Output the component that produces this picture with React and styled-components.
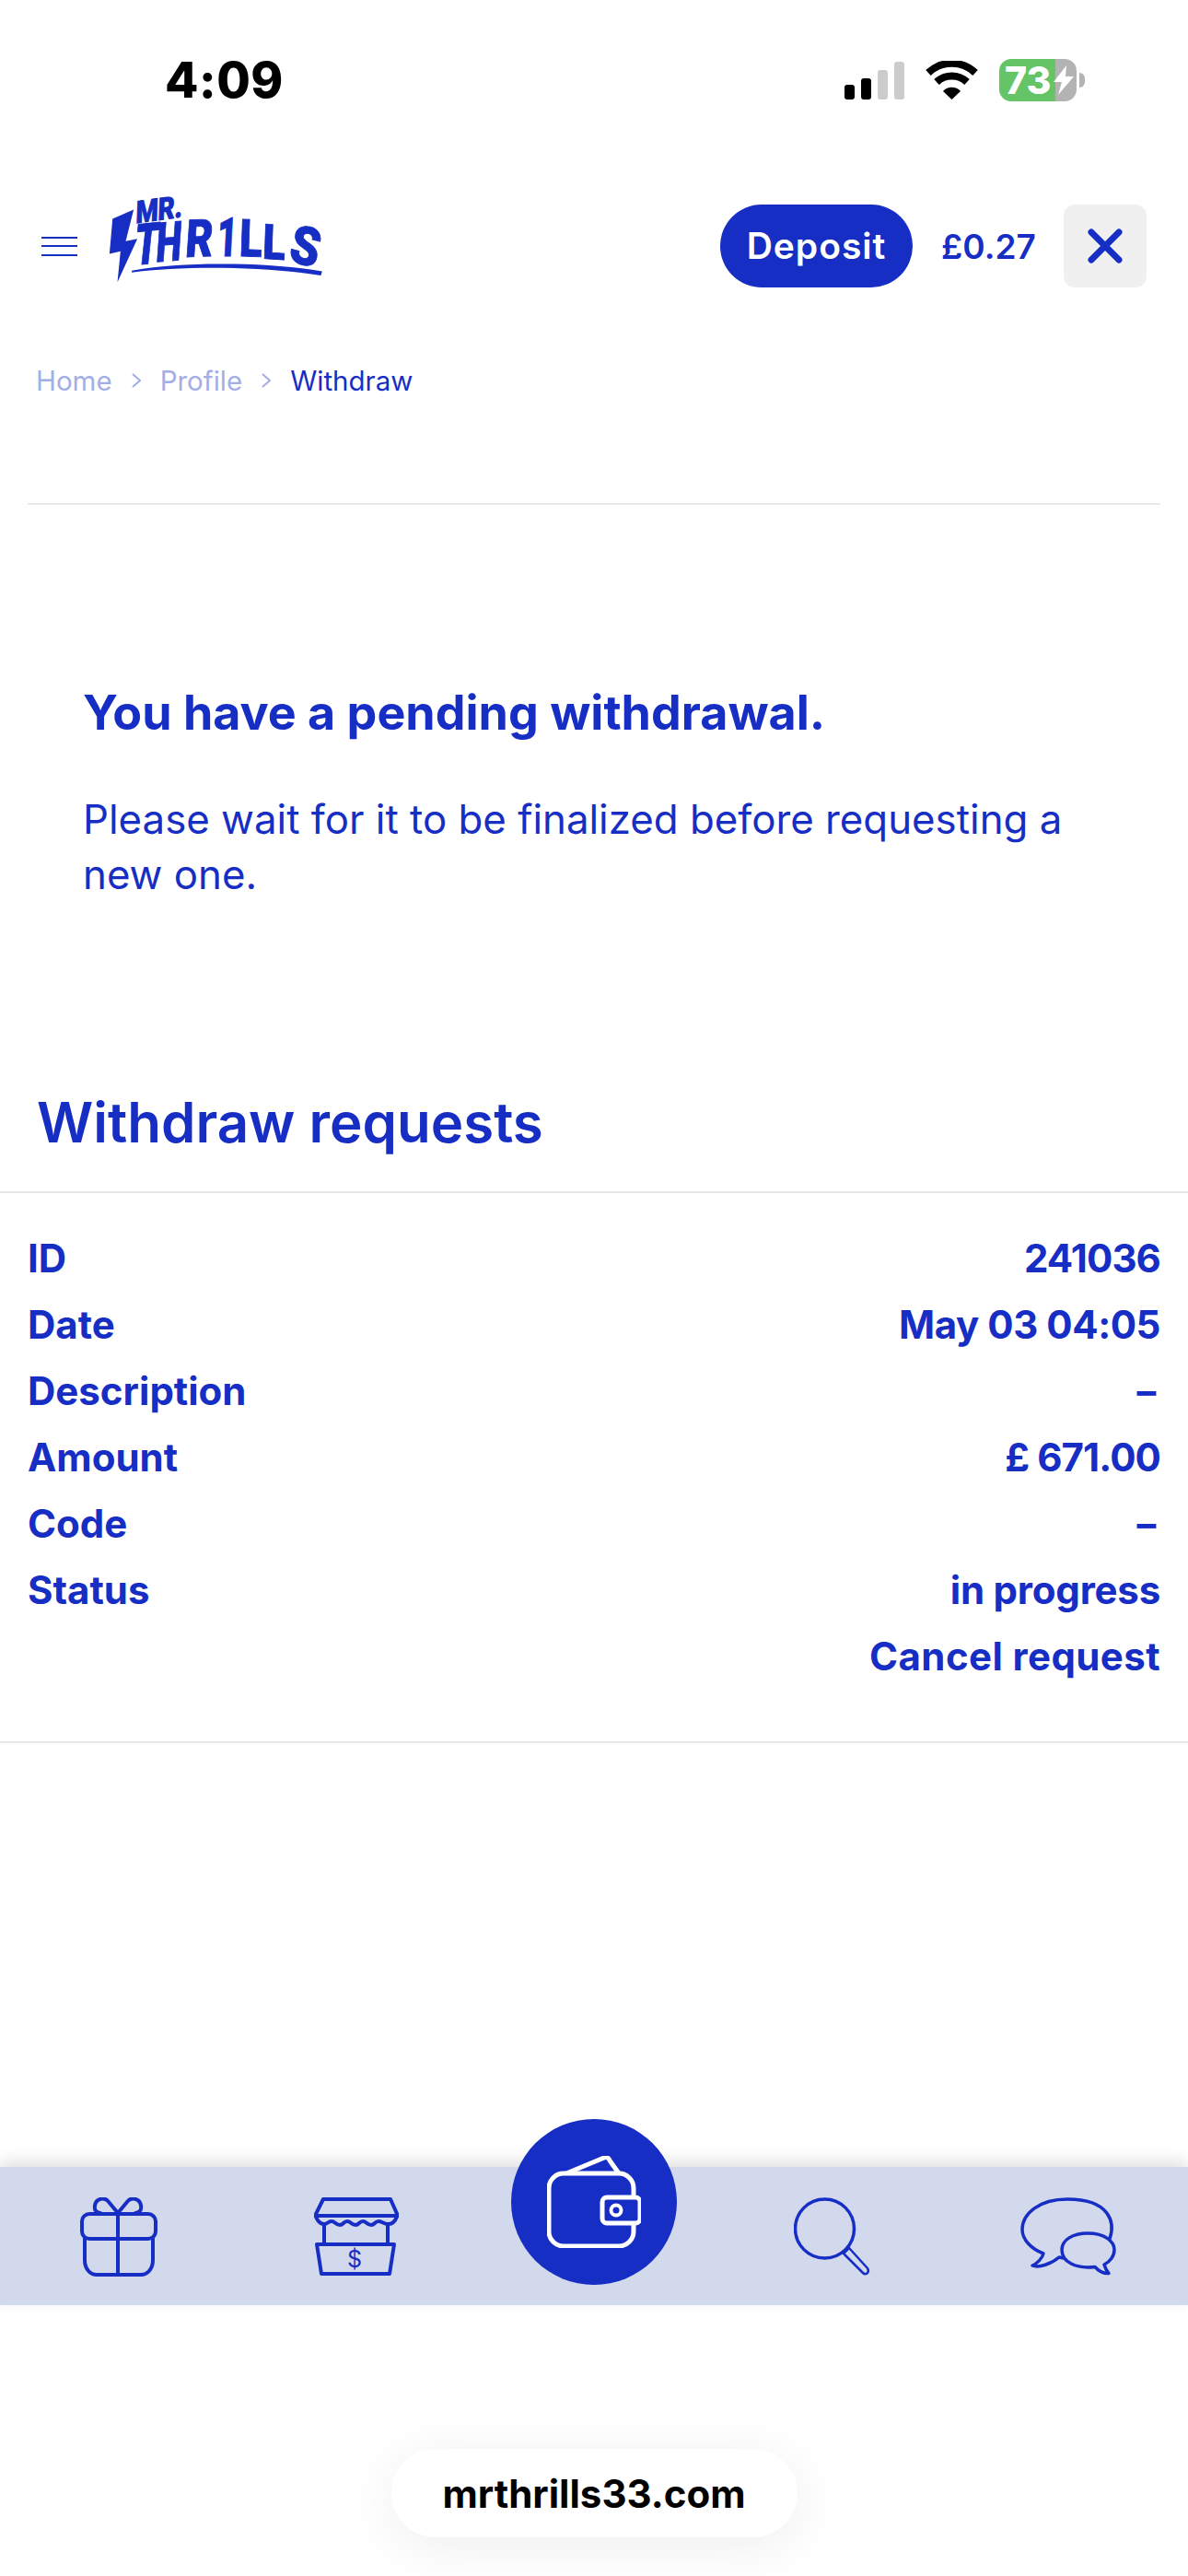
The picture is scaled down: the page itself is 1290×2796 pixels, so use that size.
import React from 'react';
import styled, { createGlobalStyle } from 'styled-components';

const BLUE = '#172ec4';

const GlobalStyle = createGlobalStyle`
  html, body {
    margin: 0;
    padding: 0;
    background: #fff;
    font-family: Inter, "Noto Sans", sans-serif;
  }
`;

const Page = styled.div`
  width: 1290px;
  height: 2796px;
  overflow: hidden;
  display: flex;
  flex-direction: column;
  color: ${BLUE};
`;

const StatusBar = styled.div`
  height: 70px;
  margin-top: 52px;
  padding: 0 121px 0 179px;
  display: flex;
  align-items: center;
  justify-content: space-between;
`;

const Clock = styled.div`
  font-family: Inter, sans-serif;
  font-size: 53px;
  font-weight: 800;
  color: #000;
  letter-spacing: 0.5px;
`;

const StatusIcons = styled.div`
  display: flex;
  align-items: center;
  gap: 23px;
`;

const Signal = styled.div`
  display: flex;
  align-items: flex-end;
  gap: 7px;
  height: 41px;
`;

const SignalBar = styled.span`
  width: 11px;
  height: ${(p) => p.$h}px;
  border-radius: 3px;
  background: ${(p) => (p.$on ? '#000' : '#cccccc')};
`;

const Battery = styled.div`
  position: relative;
  width: 84px;
  height: 46px;
  border-radius: 13px;
  background: linear-gradient(90deg, #65c466 73%, #b3b3b3 73%);
  color: #fff;
  font-size: 41px;
  font-weight: 800;
  line-height: 46px;
  padding-left: 6px;
  box-sizing: border-box;
  &::after {
    content: '';
    position: absolute;
    right: -9px;
    top: 15px;
    width: 6px;
    height: 16px;
    border-radius: 0 6px 6px 0;
    background: #b3b3b3;
  }
  svg {
    position: absolute;
    left: 58px;
    top: 7px;
  }
`;

const Header = styled.header`
  margin-top: 100px;
  height: 90px;
  padding: 0 45px;
  display: flex;
  align-items: center;
`;

const Burger = styled.div`
  width: 39px;
  height: 21px;
  display: flex;
  flex-direction: column;
  justify-content: space-between;
  span {
    height: 2px;
    background: ${BLUE};
  }
`;

const Logo = styled.svg`
  width: 233px;
  height: 98px;
  margin-left: 34px;
  margin-top: -16px;
  overflow: visible;
`;

const HeaderRight = styled.div`
  margin-left: auto;
  display: flex;
  align-items: center;
`;

const DepositButton = styled.div`
  width: 209px;
  height: 90px;
  padding-bottom: 2px;
  box-sizing: border-box;
  border-radius: 45px;
  background: ${BLUE};
  color: #fff;
  font-size: 39px;
  letter-spacing: 1px;
  font-weight: 600;
  display: flex;
  align-items: center;
  justify-content: center;
`;

const Balance = styled.div`
  margin-left: 31px;
  width: 103px;
  font-size: 37px;
  font-weight: 600;
  white-space: nowrap;
`;

const CloseButton = styled.div`
  margin-left: 30px;
  width: 90px;
  height: 90px;
  border-radius: 12px;
  background: #f0f0f0;
  display: flex;
  align-items: center;
  justify-content: center;
`;

const Breadcrumb = styled.nav`
  margin-top: 81px;
  padding-left: 39px;
  display: flex;
  align-items: center;
  height: 40px;
  font-size: 29.5px;
`;

const Crumb = styled.span`
  color: ${(p) => (p.$current ? BLUE : '#a2aee6')};
`;

const CrumbArrow = styled.svg`
  width: 10px;
  height: 16px;
  margin: 0 21px;
`;

const Divider = styled.div`
  height: 2px;
  margin: ${(p) => p.$margin || '0'};
  background: #e9e9e9;
`;

const Notice = styled.section`
  margin-top: 196px;
  padding: 0 70px 0 90px;
`;

const NoticeTitle = styled.h2`
  margin: 0;
  font-size: 52px;
  line-height: 60px;
  font-weight: 700;
`;

const NoticeText = styled.p`
  margin: 56px 0 0;
  font-size: 43.8px;
  line-height: 60px;
  font-weight: 400;
`;

const SectionTitle = styled.h1`
  margin: 198px 0 0;
  padding-left: 40px;
  font-size: 60px;
  line-height: 80px;
  font-weight: 600;
`;

const RequestTable = styled.div`
  margin-top: 35px;
  padding: 34px 30px 57px;
  border-top: 2px solid #e6e6e6;
  border-bottom: 2px solid #e6e6e6;
`;

const Row = styled.div`
  height: 72px;
  display: flex;
  align-items: center;
  justify-content: space-between;
  font-size: 42px;
  font-weight: 700;
`;

const RowValue = styled.span`
  letter-spacing: ${(p) => p.$spacing || 0}px;
  transform-origin: right center;
  transform: ${(p) => (p.$dash ? 'scaleX(1.5)' : 'none')};
`;

const NavBar = styled.nav`
  position: relative;
  margin-top: 460px;
  height: 150px;
  flex: none;
  background: #d3d9ed;
  box-shadow: 0 -6px 16px rgba(0, 0, 0, 0.12);
`;

const NavIcon = styled.svg`
  position: absolute;
  left: ${(p) => p.$x}px;
  top: ${(p) => p.$y}px;
  fill: none;
  stroke: ${BLUE};
  stroke-linejoin: round;
  stroke-linecap: round;
`;

const WalletButton = styled.div`
  position: absolute;
  left: 555px;
  top: -52px;
  width: 180px;
  height: 180px;
  border-radius: 50%;
  background: ${BLUE};
  display: flex;
  align-items: center;
  justify-content: center;
`;

const UrlPill = styled.div`
  margin: 156px auto 0;
  width: 441px;
  height: 96px;
  flex: none;
  border-radius: 48px;
  background: #fff;
  color: #000;
  font-size: 42px;
  font-weight: 700;
  display: flex;
  align-items: center;
  justify-content: center;
  box-shadow: 0 10px 60px rgba(0, 0, 0, 0.07);
`;

const ROWS = [
  ['ID', '241036', -0.9],
  ['Date', 'May 03 04:05', -0.45],
  ['Description', '-'],
  ['Amount', '£ 671.00', -0.9],
  ['Code', '-'],
  ['Status', 'in progress', -0.2],
  ['', 'Cancel request', 0.4],
];

// hand placed letters of the logo: base point, rotation, lean, x and y stretch
const LOGO_LETTERS = [
  { c: 'T', x: 165, y: 295, r: -6, s: -12, w: 0.66, h: 1 },
  { c: 'H', x: 236, y: 284, r: -5, s: -9, w: 0.64, h: 0.96 },
  { c: 'R', x: 333, y: 268, r: -2, s: -6, w: 0.74, h: 0.92 },
  { c: '1', x: 436, y: 265, r: 0, s: -3, w: 0.62, h: 0.96 },
  { c: 'L', x: 510, y: 265, r: 2, s: 0, w: 0.74, h: 0.92 },
  { c: 'L', x: 586, y: 272, r: 4, s: 2, w: 0.74, h: 0.86 },
  { c: 'S', x: 668, y: 280, r: 14, s: 2, w: 0.84, h: 0.94 },
];

function LogoMark() {
  return (
    <Logo viewBox="85 60 700 295" fill={BLUE} stroke={BLUE} strokeWidth="3">
      <path d="M166 113 L97 143 L87 257 L123 249 L113 350 L178 208 L140 216 Z" stroke="none" />
      <text
        transform="translate(172 158) rotate(-8) skewX(-10) scale(0.84 1)"
        fontFamily="Roboto, sans-serif"
        fontWeight="900"
        fontSize="100"
      >
        MR.
      </text>
      {LOGO_LETTERS.map((l, i) => (
        <text
          key={i}
          transform={`translate(${l.x} ${l.y}) rotate(${l.r}) skewX(${l.s}) scale(${l.w} ${l.h})`}
          fontFamily="Roboto, sans-serif"
          fontWeight="900"
          fontSize="185"
        >
          {l.c}
        </text>
      ))}
      <path d="M160 312 C 330 280 600 285 782 314 L778 328 C 600 298 330 295 160 318 Z" stroke="none" />
    </Logo>
  );
}

export default function App() {
  return (
    <Page>
      <GlobalStyle />
      <StatusBar>
        <Clock>4:09</Clock>
        <StatusIcons>
          <Signal>
            <SignalBar $h={16} $on />
            <SignalBar $h={23} $on />
            <SignalBar $h={32} />
            <SignalBar $h={41} />
          </Signal>
          <svg width="57" height="42" viewBox="0 0 57 42" fill="none" stroke="#000" strokeWidth="8">
            <path d="M3 13 A37 37 0 0 1 54 13" />
            <path d="M12 23 A24 24 0 0 1 45 23" />
            <path d="M19 33 L28.5 42 L38 33 A13 13 0 0 0 19 33 Z" fill="#000" stroke="none" />
          </svg>
          <Battery>
            73
            <svg width="24" height="32" viewBox="0 0 24 32" fill="#fff">
              <path d="M15 0 L1 18 H10 L6 32 L23 12 H14 Z" />
            </svg>
          </Battery>
        </StatusIcons>
      </StatusBar>

      <Header>
        <Burger>
          <span />
          <span />
          <span />
        </Burger>
        <LogoMark />
        <HeaderRight>
          <DepositButton>Deposit</DepositButton>
          <Balance>£0.27</Balance>
          <CloseButton>
            <svg width="38" height="38" viewBox="0 0 38 38" stroke={BLUE} strokeWidth="7" strokeLinecap="round">
              <path d="M4 4 L34 34 M34 4 L4 34" />
            </svg>
          </CloseButton>
        </HeaderRight>
      </Header>

      <Breadcrumb>
        <Crumb>Home</Crumb>
        <CrumbArrow viewBox="0 0 10 16" fill="none" stroke="#a2aee6" strokeWidth="2">
          <path d="M1 1 L9 8 L1 15" />
        </CrumbArrow>
        <Crumb>Profile</Crumb>
        <CrumbArrow viewBox="0 0 10 16" fill="none" stroke="#a2aee6" strokeWidth="2">
          <path d="M1 1 L9 8 L1 15" />
        </CrumbArrow>
        <Crumb $current>Withdraw</Crumb>
      </Breadcrumb>

      <Divider $margin="113px 30px 0" />

      <Notice>
        <NoticeTitle>You have a pending withdrawal.</NoticeTitle>
        <NoticeText>Please wait for it to be finalized before requesting a new one.</NoticeText>
      </Notice>

      <SectionTitle>Withdraw requests</SectionTitle>

      <RequestTable>
        {ROWS.map(([label, value, spacing]) => (
          <Row key={value + label}>
            <span>{label}</span>
            <RowValue $dash={value === '-'} $spacing={spacing}>{value}</RowValue>
          </Row>
        ))}
      </RequestTable>

      <NavBar>
        <NavIcon $x={87} $y={33} width="84" height="86" viewBox="0 0 84 86" strokeWidth="4">
          <rect x="2" y="18" width="80" height="27" rx="8" />
          <path d="M5 45 V68 C5 78 11 84 18 84 H66 C73 84 79 78 79 68 V45" />
          <path d="M41 18 V84" />
          <path d="M41 17 L31 5 C27 -1 17 1 16 9 C15 14 18 17 22 17" />
          <path d="M41 17 L51 5 C55 -1 65 1 66 9 C67 14 64 17 60 17" />
        </NavIcon>
        <NavIcon $x={341} $y={33} width="92" height="86" viewBox="0 0 92 86" strokeWidth="4">
          <path d="M10 2 H83 L91 20 H1 Z" />
          <path d="M2 21 C4 26 7 29 11 29 C15 29 15 26 19 26 C23 26 23 30 28 30 C32 30 32 26 36 26 C40 26 40 30 45 30 C49 30 49 26 53 26 C57 26 57 30 62 30 C66 30 66 26 70 26 C74 26 75 29 81 29 C85 29 88 26 90 21" />
          <path d="M11 29 V50 M80 29 V50" />
          <path d="M3 51 H87 L82 83 H8 Z" />
          <text x="44" y="76" textAnchor="middle" fontFamily="Inter, sans-serif" fontSize="25" fill={BLUE} stroke="none">
            $
          </text>
        </NavIcon>
        <WalletButton>
          <svg width="102" height="100" viewBox="0 0 102 100" fill="none" stroke="#fff" strokeWidth="5" strokeLinejoin="round">
            <path d="M21 19 L62 2 C65 1 67 2 68 5 L78 19" />
            <rect x="2" y="19" width="92" height="79" rx="16" />
            <rect x="60" y="45" width="41" height="28" rx="5" fill={BLUE} />
            <circle cx="75" cy="59" r="5.5" strokeWidth="4" />
          </svg>
        </WalletButton>
        <NavIcon $x={862} $y={33} width="84" height="86" viewBox="0 0 84 86" strokeWidth="3.5">
          <circle cx="33.5" cy="34" r="32" />
          <path d="M54 61 L60 55 L80 77 Q82 80 79.5 82.5 Q77 84 75 82 Z" strokeWidth="2.5" />
        </NavIcon>
        <NavIcon $x={1108} $y={33} width="105" height="86" viewBox="0 0 105 86" strokeWidth="3.5">
          <path d="M97 45 C103 28 98 2 51 2 C20 2 2 18 2 35 C2 46 12 56 25 61 C24 66 18 72 13 74 C20 77 34 72 42 65 L47 66" />
          <path d="M81 75.5 C60 78 45 70 45 57 C45 46 57 39 73 39 C92 39 102 48 102 57 C102 64 97 70 91 73 C92 77 94 80 96 82.5 C90 83 85 80 81 75.5 Z" />
        </NavIcon>
      </NavBar>

      <UrlPill>mrthrills33.com</UrlPill>
    </Page>
  );
}
